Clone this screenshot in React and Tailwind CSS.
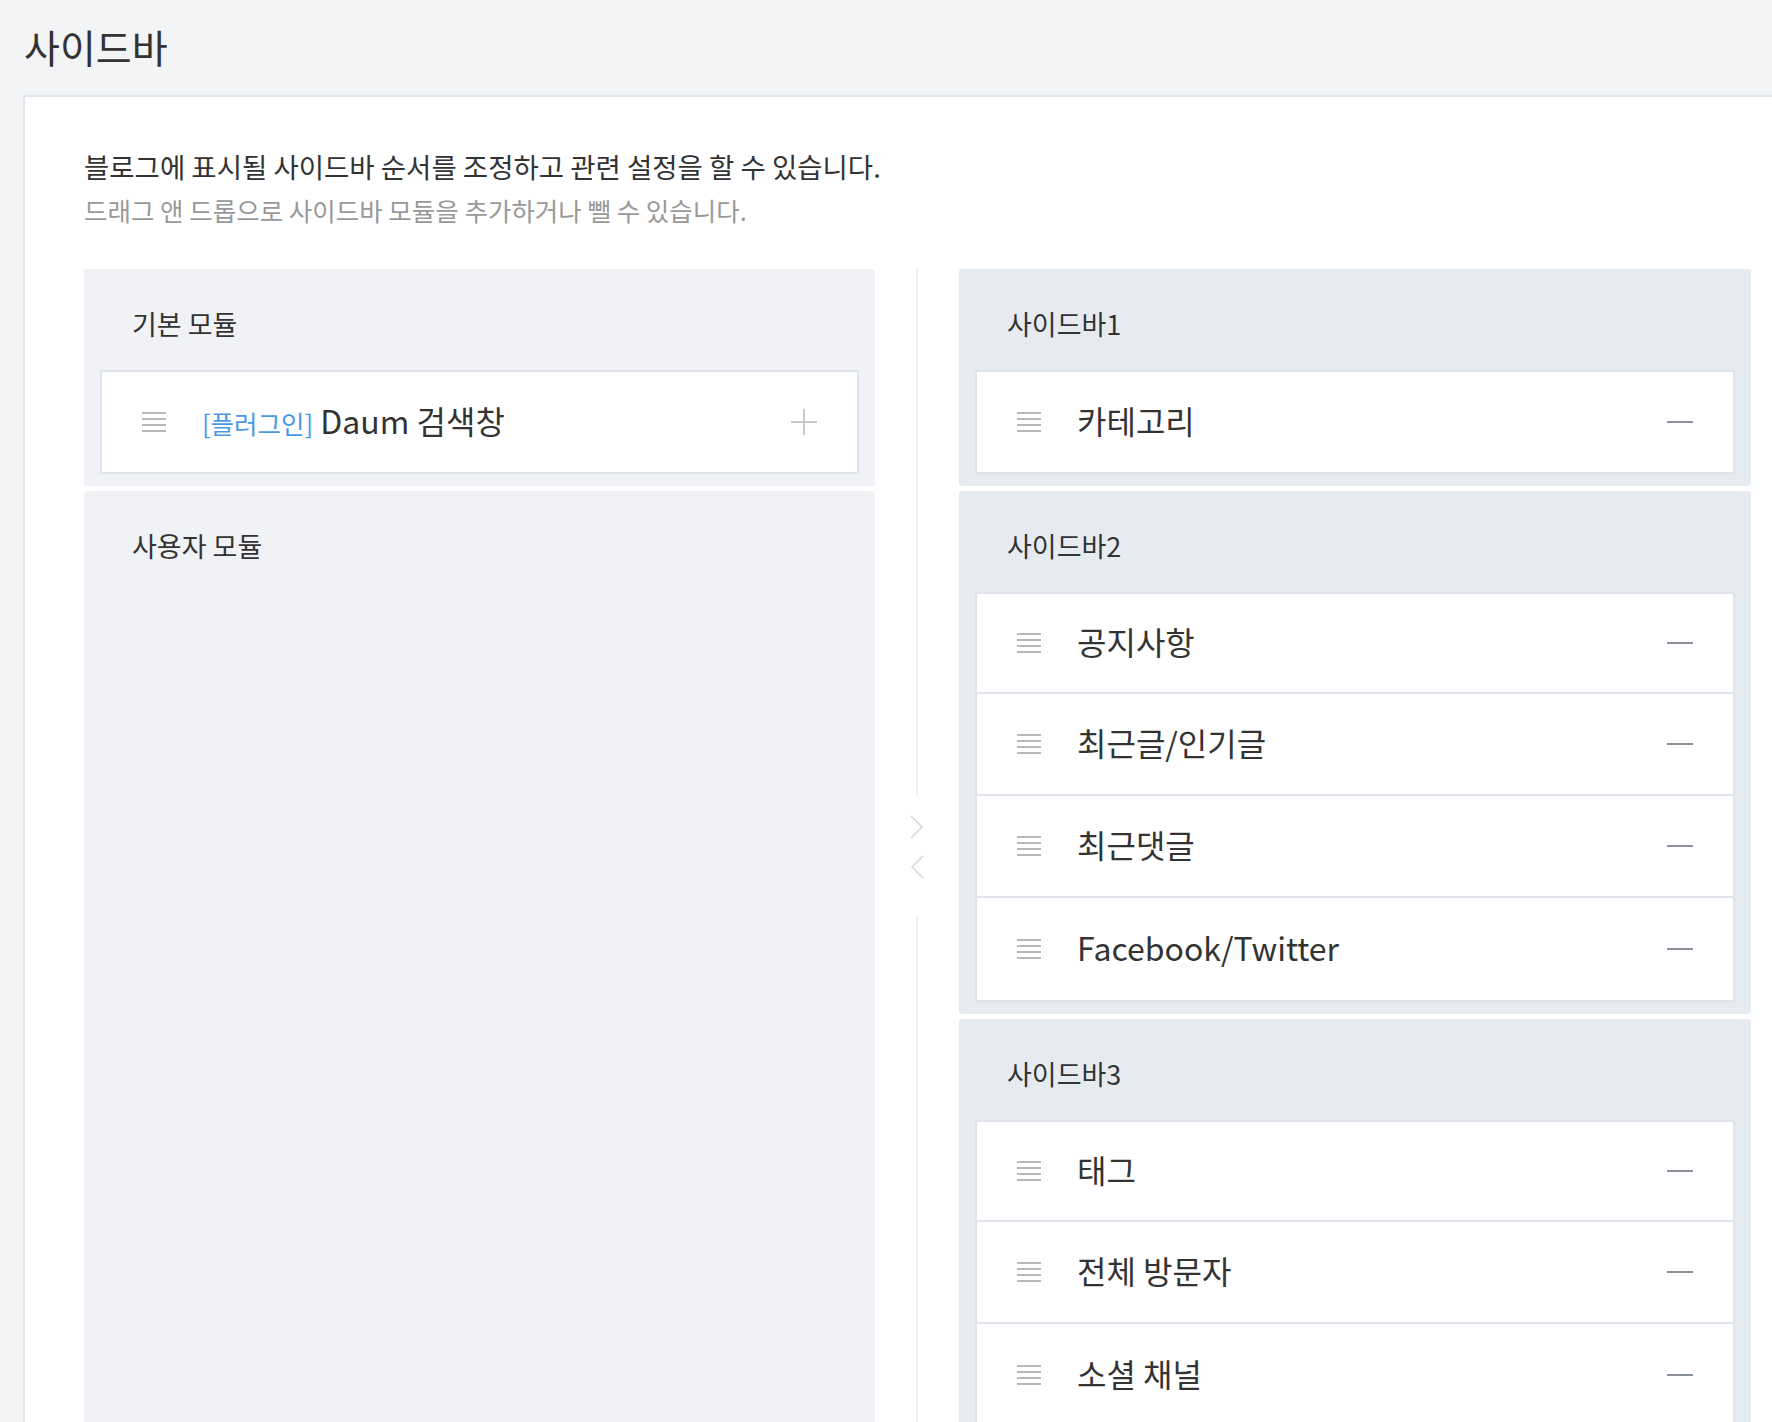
import React from "react";

function Handle() {
  return (
    <svg width="24" height="20" viewBox="0 0 24 20" className="shrink-0">
      <rect x="0" y="0" width="24" height="2" fill="#b8b8b8" />
      <rect x="0" y="6" width="24" height="2" fill="#b8b8b8" />
      <rect x="0" y="12" width="24" height="2" fill="#b8b8b8" />
      <rect x="0" y="18" width="24" height="2" fill="#b8b8b8" />
    </svg>
  );
}

function Minus() {
  return <span className="block h-[2px] w-[26px] bg-[#8a919c]" />;
}

function Plus() {
  return (
    <svg width="26" height="26" viewBox="0 0 26 26">
      <rect x="12" y="0" width="2" height="26" fill="#c9c9c9" />
      <rect x="0" y="12" width="26" height="2" fill="#c9c9c9" />
    </svg>
  );
}

function Item({ children, action }) {
  return (
    <div className="flex h-[102px] items-center bg-white pl-[40px] pr-[40px] first:h-[100px]">
      <Handle />
      <div className="ml-[36px] flex-1 pb-[5px] text-[32px] text-[#333]">{children}</div>
      {action}
    </div>
  );
}

function Panel({ title, tone, items, grow, children }) {
  return (
    <div
      className={`rounded-[3px] px-[16px] pb-[12px] ${tone} ${grow ? "flex-1" : ""}`}
    >
      <div className="flex h-[101px] items-center pl-[32px] pt-[10px] text-[27px] text-[#333]">
        {title}
      </div>
      {items && (
        <div className="divide-y-2 divide-[#dfe4ec] border-2 border-[#dfe4ec]">
          {items.map((label) => (
            <Item key={label} action={<Minus />}>
              {label}
            </Item>
          ))}
        </div>
      )}
      {children}
    </div>
  );
}

function Chevron({ dir }) {
  return (
    <svg width="14" height="24" viewBox="0 0 14 24">
      <polyline
        points={dir === "right" ? "1,1 12,12 1,23" : "13,1 2,12 13,23"}
        fill="none"
        stroke="#d3dae4"
        strokeWidth="1.6"
      />
    </svg>
  );
}

export default function App() {
  return (
    <div className="flex h-screen flex-col overflow-hidden bg-[#f3f4f6] font-['Noto_Sans_CJK_KR',sans-serif] text-[#333]">
      <div className="flex h-[95px] shrink-0 items-center pl-[24px] pb-[2px]">
        <h1 className="text-[39px] leading-none">사이드바</h1>
      </div>

      <div className="ml-[23px] flex flex-1 flex-col border-l-2 border-t-2 border-[#e1e5ec] bg-white pl-[59px] pr-[21px] pt-[50px]">
        <p className="text-[27.5px] leading-[38px]">
          블로그에 표시될 사이드바 순서를 조정하고 관련 설정을 할 수 있습니다.
        </p>
        <p className="mt-[7px] text-[25.5px] leading-[36px] text-[#999]">
          드래그 앤 드롭으로 사이드바 모듈을 추가하거나 뺄 수 있습니다.
        </p>

        <div className="mt-[41px] flex flex-1">
          {/* 모듈 목록 */}
          <div className="flex w-[791px] flex-col gap-[5px]">
            <Panel title="기본 모듈" tone="bg-[#f0f2f6]">
              <div className="border-2 border-[#dfe4ec]">
                <Item action={<Plus />}>
                  <span className="text-[25.5px] text-[#4a98e4]">[플러그인]</span>{" "}
                  Daum 검색창
                </Item>
              </div>
            </Panel>
            <Panel title="사용자 모듈" tone="bg-[#f0f2f6]" grow />
          </div>

          {/* 구분선 */}
          <div className="flex w-[84px] flex-col items-center">
            <div className="h-[525px] w-[2px] bg-[#eef0f4]" />
            <div className="mt-[21px]">
              <Chevron dir="right" />
            </div>
            <div className="mt-[16px]">
              <Chevron dir="left" />
            </div>
            <div className="mt-[38px] w-[2px] flex-1 bg-[#eef0f4]" />
          </div>

          {/* 사이드바 */}
          <div className="flex w-[792px] flex-col gap-[5px]">
            <Panel title="사이드바1" tone="bg-[#e6ebf2]" items={["카테고리"]} />
            <Panel
              title="사이드바2"
              tone="bg-[#e6ebf2]"
              items={["공지사항", "최근글/인기글", "최근댓글", "Facebook/Twitter"]}
            />
            <Panel
              title="사이드바3"
              tone="bg-[#e6ebf2]"
              items={["태그", "전체 방문자", "소셜 채널"]}
            />
          </div>
        </div>
      </div>
    </div>
  );
}
